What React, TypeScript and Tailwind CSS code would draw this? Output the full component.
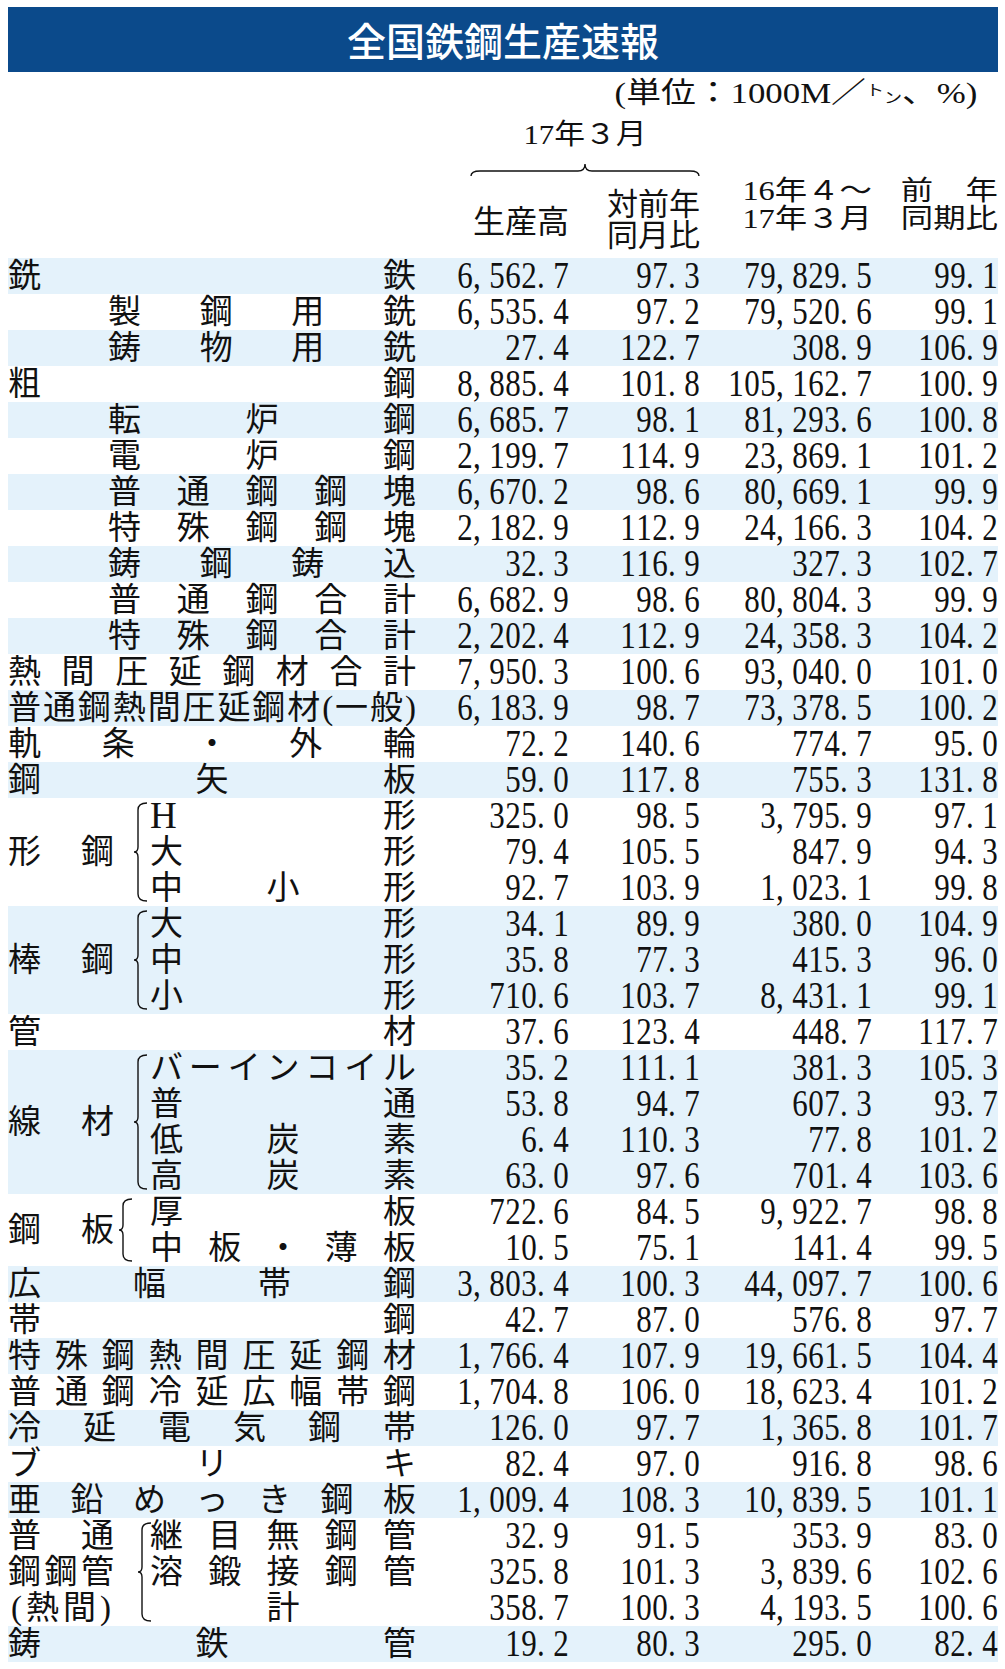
import React from 'react';

const COLS = 'grid grid-cols-[410px_151px_131px_172px_126px]';
const SUBCOLS = 'grid grid-cols-[268px_151px_131px_172px_126px]';
const SHADE = 'bg-[#e4f2fb]';

type Vals = [string, string, string, string];
type SubRow = { label: string; center?: boolean; v: Vals };
type Item =
  | { kind: 'row'; label: string; indent?: boolean; v: Vals }
  | { kind: 'group'; left?: string; lines?: string[]; braceX: number; rows: SubRow[] };

const items: Item[] = [
  { kind: 'row', label: '銑鉄', v: ['6,562.7', '97.3', '79,829.5', '99.1'] },
  { kind: 'row', label: '製鋼用銑', indent: true, v: ['6,535.4', '97.2', '79,520.6', '99.1'] },
  { kind: 'row', label: '鋳物用銑', indent: true, v: ['27.4', '122.7', '308.9', '106.9'] },
  { kind: 'row', label: '粗鋼', v: ['8,885.4', '101.8', '105,162.7', '100.9'] },
  { kind: 'row', label: '転炉鋼', indent: true, v: ['6,685.7', '98.1', '81,293.6', '100.8'] },
  { kind: 'row', label: '電炉鋼', indent: true, v: ['2,199.7', '114.9', '23,869.1', '101.2'] },
  { kind: 'row', label: '普通鋼鋼塊', indent: true, v: ['6,670.2', '98.6', '80,669.1', '99.9'] },
  { kind: 'row', label: '特殊鋼鋼塊', indent: true, v: ['2,182.9', '112.9', '24,166.3', '104.2'] },
  { kind: 'row', label: '鋳鋼鋳込', indent: true, v: ['32.3', '116.9', '327.3', '102.7'] },
  { kind: 'row', label: '普通鋼合計', indent: true, v: ['6,682.9', '98.6', '80,804.3', '99.9'] },
  { kind: 'row', label: '特殊鋼合計', indent: true, v: ['2,202.4', '112.9', '24,358.3', '104.2'] },
  { kind: 'row', label: '熱間圧延鋼材合計', v: ['7,950.3', '100.6', '93,040.0', '101.0'] },
  { kind: 'row', label: '普通鋼熱間圧延鋼材(一般)', v: ['6,183.9', '98.7', '73,378.5', '100.2'] },
  { kind: 'row', label: '軌条・外輪', v: ['72.2', '140.6', '774.7', '95.0'] },
  { kind: 'row', label: '鋼矢板', v: ['59.0', '117.8', '755.3', '131.8'] },
  {
    kind: 'group', left: '形鋼', braceX: 19, rows: [
      { label: 'H形', v: ['325.0', '98.5', '3,795.9', '97.1'] },
      { label: '大形', v: ['79.4', '105.5', '847.9', '94.3'] },
      { label: '中小形', v: ['92.7', '103.9', '1,023.1', '99.8'] },
    ],
  },
  {
    kind: 'group', left: '棒鋼', braceX: 19, rows: [
      { label: '大形', v: ['34.1', '89.9', '380.0', '104.9'] },
      { label: '中形', v: ['35.8', '77.3', '415.3', '96.0'] },
      { label: '小形', v: ['710.6', '103.7', '8,431.1', '99.1'] },
    ],
  },
  { kind: 'row', label: '管材', v: ['37.6', '123.4', '448.7', '117.7'] },
  {
    kind: 'group', left: '線材', braceX: 19, rows: [
      { label: 'バーインコイル', v: ['35.2', '111.1', '381.3', '105.3'] },
      { label: '普通', v: ['53.8', '94.7', '607.3', '93.7'] },
      { label: '低炭素', v: ['6.4', '110.3', '77.8', '101.2'] },
      { label: '高炭素', v: ['63.0', '97.6', '701.4', '103.6'] },
    ],
  },
  {
    kind: 'group', left: '鋼板', braceX: 4, rows: [
      { label: '厚板', v: ['722.6', '84.5', '9,922.7', '98.8'] },
      { label: '中板・薄板', v: ['10.5', '75.1', '141.4', '99.5'] },
    ],
  },
  { kind: 'row', label: '広幅帯鋼', v: ['3,803.4', '100.3', '44,097.7', '100.6'] },
  { kind: 'row', label: '帯鋼', v: ['42.7', '87.0', '576.8', '97.7'] },
  { kind: 'row', label: '特殊鋼熱間圧延鋼材', v: ['1,766.4', '107.9', '19,661.5', '104.4'] },
  { kind: 'row', label: '普通鋼冷延広幅帯鋼', v: ['1,704.8', '106.0', '18,623.4', '101.2'] },
  { kind: 'row', label: '冷延電気鋼帯', v: ['126.0', '97.7', '1,365.8', '101.7'] },
  { kind: 'row', label: 'ブリキ', v: ['82.4', '97.0', '916.8', '98.6'] },
  { kind: 'row', label: '亜鉛めっき鋼板', v: ['1,009.4', '108.3', '10,839.5', '101.1'] },
  {
    kind: 'group', lines: ['普通', '鋼鋼管', '(熱間)'], braceX: 23, rows: [
      { label: '継目無鋼管', v: ['32.9', '91.5', '353.9', '83.0'] },
      { label: '溶鍛接鋼管', v: ['325.8', '101.3', '3,839.6', '102.6'] },
      { label: '計', center: true, v: ['358.7', '100.3', '4,193.5', '100.6'] },
    ],
  },
  { kind: 'row', label: '鋳鉄管', v: ['19.2', '80.3', '295.0', '82.4'] },
];

function Chars({ text, center }: { text: string; center?: boolean }) {
  return (
    <div className={`flex h-full items-center ${center ? 'justify-center' : 'justify-between'}`}>
      {Array.from(text).map((c, i) =>
        c === 'H' ? (
          <span key={i} className="text-[37px] leading-[36px]">{c}</span>
        ) : (
          <span key={i}>{c}</span>
        ),
      )}
    </div>
  );
}

function Num({ s }: { s: string }) {
  return (
    <div className="flex h-full items-center justify-end">
      <span className="flex scale-y-[1.2] text-[31px] leading-[26px]">
        {Array.from(s).map((c, i) => (
          <span key={i} className={c === ',' || c === '.' ? 'w-[16px] text-left' : 'w-[16px] text-center'}>
            {c}
          </span>
        ))}
      </span>
    </div>
  );
}

function Nums({ v }: { v: Vals }) {
  return (
    <>
      {v.map((n, i) => (
        <Num key={i} s={n} />
      ))}
    </>
  );
}

function Brace({ h }: { h: number }) {
  const m = h / 2;
  return (
    <svg width="14" height={h} viewBox={`0 0 14 ${h}`} fill="none">
      <path
        d={`M14 1 Q5 1 5 8 L5 ${m - 5} Q5 ${m} 1 ${m} Q5 ${m} 5 ${m + 5} L5 ${h - 8} Q5 ${h - 1} 14 ${h - 1}`}
        stroke="#111"
        strokeWidth="1.4"
      />
    </svg>
  );
}

function TopBrace() {
  const w = 230;
  const m = w / 2;
  return (
    <svg width={w} height="14" viewBox={`0 0 ${w} 14`} fill="none">
      <path
        d={`M1 13 Q1 8 10 8 L${m - 7} 8 Q${m} 8 ${m} 1 Q${m} 8 ${m + 7} 8 L${w - 10} 8 Q${w - 1} 8 ${w - 1} 13`}
        stroke="#111"
        strokeWidth="1.4"
      />
    </svg>
  );
}

function Group({ item, shaded }: { item: Extract<Item, { kind: 'group' }>; shaded: boolean }) {
  const h = item.rows.length * 36;
  return (
    <div className={`flex ${shaded ? SHADE : ''}`}>
      <div className="flex w-[106px] flex-col justify-center">
        {item.left && (
          <div className="h-[36px]">
            <Chars text={item.left} />
          </div>
        )}
        {item.lines?.map((l, i) => (
          <div key={i} className={`h-[36px] ${l.startsWith('(') ? 'px-[3px]' : ''}`}>
            <Chars text={l} />
          </div>
        ))}
      </div>
      <div className="w-[36px] py-[4px]">
        <div className={item.braceX === 4 ? 'ml-[4px]' : item.braceX === 23 ? 'ml-[23px]' : 'ml-[19px]'}>
          <Brace h={h - 8} />
        </div>
      </div>
      <div className="w-[848px]">
        {item.rows.map((r, i) => (
          <div key={i} className={`${SUBCOLS} h-[36px]`}>
            <div className="pr-[2px]">
              <Chars text={r.label} center={r.center} />
            </div>
            <Nums v={r.v} />
          </div>
        ))}
      </div>
    </div>
  );
}

export default function App() {
  return (
    <div className="min-h-[1669px] w-[1005px] bg-white font-['Liberation_Serif','Noto_Sans_CJK_JP',serif] text-[#111]">
      <div className="ml-[8px] w-[990px]">
        <div className="h-[7px]" />
        <div className="flex h-[65px] items-center justify-center bg-[#0b4a8b] font-['Noto_Sans_CJK_JP',sans-serif] text-[39px] font-medium text-white">
          全国鉄鋼生産速報
        </div>

        {/* unit */}
        <div className="flex h-[37px] justify-end pr-[21px] pt-[6px]">
          <span className="inline-block origin-right scale-x-[1.2] text-[29px] leading-[31px]">
            (単位：1000M／<span className="relative top-[-8px] text-[15px]">ト</span>
            <span className="text-[15px]">ン</span>、%)
          </span>
        </div>

        <div className="h-[11px]" />
        <div className="ml-[462px] flex h-[30px] w-[230px] justify-center">
          <span className="inline-block scale-x-[1.1] text-[28px] leading-[30px]">17年３月</span>
        </div>
        <div className="h-[13px]" />
        <div className="ml-[462px] h-[14px]">
          <TopBrace />
        </div>

        {/* column headers */}
        <div className={`${COLS} h-[81px]`}>
          <div />
          <div className="flex justify-end pt-[29px] text-[32px] leading-[32px]">生産高</div>
          <div className="flex flex-col items-end pt-[12px] text-[31px] leading-[31px]">
            <span>対前年</span>
            <span>同月比</span>
          </div>
          <div className="flex flex-col items-end text-[27px] leading-[28px]">
            <span className="inline-block origin-right scale-x-[1.2]">16年４～</span>
            <span className="inline-block origin-right scale-x-[1.2]">17年３月</span>
          </div>
          <div className="flex flex-col items-end text-[27px] leading-[28px]">
            <span className="inline-block origin-right scale-x-[1.2]">前　年</span>
            <span className="inline-block origin-right scale-x-[1.2]">同期比</span>
          </div>
        </div>

        {/* body */}
        <div className="text-[33px] leading-[36px]">
          {items.map((it, i) => {
            const shaded = i % 2 === 0;
            if (it.kind === 'group') return <Group key={i} item={it} shaded={shaded} />;
            return (
              <div key={i} className={`${COLS} h-[36px] ${shaded ? SHADE : ''}`}>
                <div className={it.indent ? 'pl-[100px] pr-[2px]' : 'pr-[2px]'}>
                  <Chars text={it.label} />
                </div>
                <Nums v={it.v} />
              </div>
            );
          })}
        </div>
      </div>
    </div>
  );
}
